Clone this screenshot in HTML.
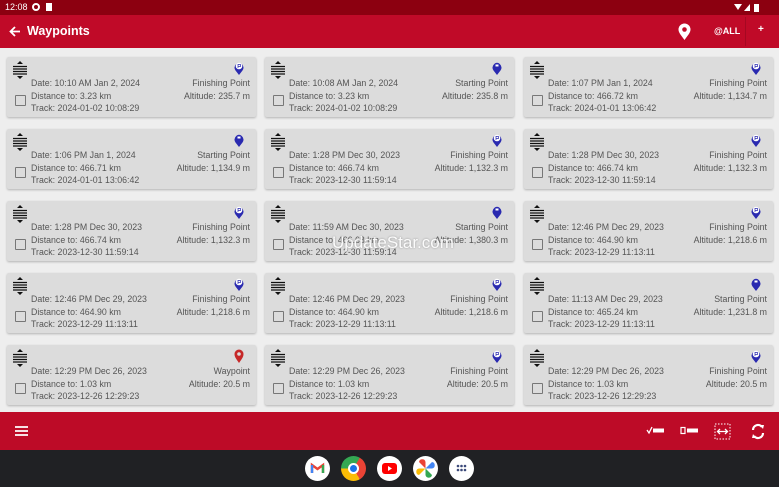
<!DOCTYPE html>
<html><head><meta charset="utf-8"><style>
*{margin:0;padding:0;box-sizing:border-box}
html,body{width:779px;height:487px;overflow:hidden}
body{background:#eeeeee;font-family:"Liberation Sans",sans-serif;position:relative}
.sb{position:absolute;left:0;top:0;width:779px;height:15px;background:#8c0010;color:#fff;font-size:9px}
.ab{position:absolute;left:0;top:15px;width:779px;height:33px;background:#c00a28;color:#fff}
.card{position:absolute;width:249px;height:60px;background:#dcdcdc;border-radius:2px;box-shadow:0 1px 2px rgba(0,0,0,.25);font-size:8.8px;color:#555}
.card .l{position:absolute;left:24px;line-height:12.5px;top:20px}
.card .r{position:absolute;right:6px;text-align:right;line-height:12.5px;top:20px}
.cb{position:absolute;left:8px;top:38px;width:11px;height:11px;border:1.3px solid #777;border-radius:1px}
.drag{position:absolute;left:5px;top:4px}
.pin{position:absolute;right:12px;top:4px}
.bb{position:absolute;left:0;top:412px;width:779px;height:38px;background:#bd0b27}
.nav{position:absolute;left:0;top:450px;width:779px;height:37px;background:#202124}
.app{position:absolute;top:6px;width:25px;height:25px;border-radius:50%;background:#fff}
.wm{position:absolute;left:332px;top:233px;font-size:17px;color:#fff;text-shadow:0 0 2px #888;opacity:.9}
</style></head><body>
<div class="sb"><span style="position:absolute;left:5px;top:2px">12:08</span>
<span style="position:absolute;left:32px;top:3px;width:8px;height:8px;border-radius:50%;border:2px solid #fff"></span>
<span style="position:absolute;left:46px;top:3px;width:6px;height:8px;background:#fff"></span>
<svg style="position:absolute;left:734px;top:3px" width="40" height="9"><path d="M0 1 L8 1 L4 7Z" fill="#fff"/><path d="M10 8 L16 1 L16 8Z" fill="#fff"/><rect x="20" y="1" width="5" height="8" fill="#fff"/></svg></div>
<div class="ab">
<svg style="position:absolute;left:9px;top:11px" width="12" height="11"><path d="M11 5.5H2M6 1L1.5 5.5L6 10" stroke="#fff" stroke-width="1.8" fill="none"/></svg>
<span style="position:absolute;left:27px;top:9px;font-size:12.5px;font-weight:bold">Waypoints</span>
<svg style="position:absolute;left:678px;top:8px" width="13" height="18"><path d="M6.5 17C2 11 0.5 9 0.5 6.5a6 6 0 0 1 12 0C12.5 9 11 11 6.5 17Z" fill="#fff"/><circle cx="6.5" cy="6.5" r="2.3" fill="#c00a28"/></svg>
<span style="position:absolute;left:714px;top:11px;font-size:9px;font-weight:bold">@ALL</span>
<div style="position:absolute;left:745px;top:2px;width:1px;height:29px;background:#a50822"></div>
<span style="position:absolute;left:758px;top:9px;font-size:10px;font-weight:bold">+</span>
</div>
<div id="cards"></div>
<div class="wm">UpdateStar.com</div>
<div class="bb">
<svg style="position:absolute;left:15px;top:14px" width="13" height="10"><path d="M0 1H13M0 5H13M0 9H13" stroke="#fff" stroke-width="1.8"/></svg>
<svg style="position:absolute;left:646px;top:14px" width="20" height="9"><path d="M1 4L3 7L6 1" stroke="#fff" stroke-width="1.3" fill="none"/><rect x="7" y="2.5" width="11" height="4" fill="#fff"/></svg>
<svg style="position:absolute;left:680px;top:14px" width="20" height="9"><rect x="1" y="1.5" width="4" height="6" stroke="#fff" stroke-width="1.2" fill="none"/><rect x="7" y="2.5" width="11" height="4" fill="#fff"/></svg>
<svg style="position:absolute;left:714px;top:11px" width="17" height="17"><rect x="1" y="1" width="15" height="15" stroke="#fff" stroke-dasharray="1.5 1.5" fill="none"/><path d="M4 8.5H13M6 6L3.5 8.5L6 11M11 6L13.5 8.5L11 11" stroke="#fff" stroke-width="1.3" fill="none"/></svg>
<svg style="position:absolute;left:750px;top:10px" width="16" height="19"><path d="M3 8a5 5 0 0 1 9-3M13 11a5 5 0 0 1-9 3" stroke="#fff" stroke-width="2.2" fill="none"/><path d="M10 3L14 3L13 7ZM6 16L2 16L3 12Z" fill="#fff"/></svg>
</div>
<div class="nav">
<div class="app" style="left:305px"><svg width="25" height="25"><path d="M7 17V9L12.5 13L18 9V17" stroke="#ea4335" stroke-width="2.4" fill="none"/><path d="M7 17V9" stroke="#4285f4" stroke-width="2.4"/><path d="M18 17V9" stroke="#34a853" stroke-width="2.4"/></svg></div>
<div class="app" style="left:341px;background:conic-gradient(from 30deg,#ea4335 0 120deg,#fbbc05 120deg 240deg,#34a853 240deg 360deg)"><div style="position:absolute;left:7px;top:7px;width:11px;height:11px;border-radius:50%;background:#1a73e8;border:2px solid #fff"></div></div>
<div class="app" style="left:377px"><div style="position:absolute;left:5px;top:7px;width:15px;height:11px;border-radius:3px;background:#f00"></div><svg style="position:absolute;left:0;top:0" width="25" height="25"><path d="M11 10L15 12.5L11 15Z" fill="#fff"/></svg></div>
<div class="app" style="left:413px"><svg width="25" height="25"><path d="M12.5 12.5L12.5 6a3.3 3.3 0 0 0-6.5 0Z" fill="#ea4335"/><path d="M12.5 12.5L19 12.5a3.3 3.3 0 0 0 0-6.5Z" fill="#4285f4"/><path d="M12.5 12.5L12.5 19a3.3 3.3 0 0 0 6.5 0Z" fill="#34a853"/><path d="M12.5 12.5L6 12.5a3.3 3.3 0 0 0 0 6.5Z" fill="#fbbc05"/></svg></div>
<div class="app" style="left:449px"><svg width="25" height="25" fill="#3c4a7a"><circle cx="9" cy="10" r="1.3"/><circle cx="12.5" cy="10" r="1.3"/><circle cx="16" cy="10" r="1.3"/><circle cx="9" cy="14" r="1.3"/><circle cx="12.5" cy="14" r="1.3"/><circle cx="16" cy="14" r="1.3"/></svg></div>
</div>
<script>
var d=[
["Date: 10:10 AM Jan 2, 2024","Distance to: 3.23 km","Track: 2024-01-02 10:08:29","Finishing Point","Altitude: 235.7 m","f"],
["Date: 10:08 AM Jan 2, 2024","Distance to: 3.23 km","Track: 2024-01-02 10:08:29","Starting Point","Altitude: 235.8 m","s"],
["Date: 1:07 PM Jan 1, 2024","Distance to: 466.72 km","Track: 2024-01-01 13:06:42","Finishing Point","Altitude: 1,134.7 m","f"],
["Date: 1:06 PM Jan 1, 2024","Distance to: 466.71 km","Track: 2024-01-01 13:06:42","Starting Point","Altitude: 1,134.9 m","s"],
["Date: 1:28 PM Dec 30, 2023","Distance to: 466.74 km","Track: 2023-12-30 11:59:14","Finishing Point","Altitude: 1,132.3 m","f"],
["Date: 1:28 PM Dec 30, 2023","Distance to: 466.74 km","Track: 2023-12-30 11:59:14","Finishing Point","Altitude: 1,132.3 m","f"],
["Date: 1:28 PM Dec 30, 2023","Distance to: 466.74 km","Track: 2023-12-30 11:59:14","Finishing Point","Altitude: 1,132.3 m","f"],
["Date: 11:59 AM Dec 30, 2023","Distance to: 466.68 km","Track: 2023-12-30 11:59:14","Starting Point","Altitude: 1,380.3 m","s"],
["Date: 12:46 PM Dec 29, 2023","Distance to: 464.90 km","Track: 2023-12-29 11:13:11","Finishing Point","Altitude: 1,218.6 m","f"],
["Date: 12:46 PM Dec 29, 2023","Distance to: 464.90 km","Track: 2023-12-29 11:13:11","Finishing Point","Altitude: 1,218.6 m","f"],
["Date: 12:46 PM Dec 29, 2023","Distance to: 464.90 km","Track: 2023-12-29 11:13:11","Finishing Point","Altitude: 1,218.6 m","f"],
["Date: 11:13 AM Dec 29, 2023","Distance to: 465.24 km","Track: 2023-12-29 11:13:11","Starting Point","Altitude: 1,231.8 m","s"],
["Date: 12:29 PM Dec 26, 2023","Distance to: 1.03 km","Track: 2023-12-26 12:29:23","Waypoint","Altitude: 20.5 m","w"],
["Date: 12:29 PM Dec 26, 2023","Distance to: 1.03 km","Track: 2023-12-26 12:29:23","Finishing Point","Altitude: 20.5 m","f"],
["Date: 12:29 PM Dec 26, 2023","Distance to: 1.03 km","Track: 2023-12-26 12:29:23","Finishing Point","Altitude: 20.5 m","f"]];
var h="",xs=[7,265,524];
d.forEach(function(c,i){var x=xs[i%3],y=57+Math.floor(i/3)*72;
var pin=c[5]=="w"?'<path d="M5 14C1.5 9 .5 7.5 .5 5a4.5 4.5 0 0 1 9 0C9.5 7.5 8.5 9 5 14Z" fill="#c62828"/><circle cx="5" cy="5" r="1.8" fill="#dcdcdc"/>':
'<path d="M5 14L1.5 9.5A4.5 4.5 0 1 1 8.5 9.5Z" fill="#2a2ab0"/><circle cx="5" cy="5" r="3.3" fill="'+(c[5]=="s"?'#2a2ab0':'#fff')+'"/>'+(c[5]=="s"?'<rect x="3.5" y="3.5" width="3" height="2" fill="#fff"/>':'<path d="M4 3V7M4 3.5H6.5V5.5H4" stroke="#2a2ab0" stroke-width=".7" fill="none"/>');
h+='<div class="card" style="left:'+x+'px;top:'+y+'px"><svg class="drag" width="16" height="18"><path d="M8 0L5 3H11Z M8 18L5 15H11Z" fill="#111"/><path d="M1 5.5H15M1 8H15M1 10.5H15M1 13H15" stroke="#111" stroke-width="1.3"/></svg><svg class="pin" width="10" height="15">'+pin+'</svg><div class="l">'+c[0]+'<br>'+c[1]+'<br>'+c[2]+'</div><div class="r">'+c[3]+'<br>'+c[4]+'</div><div class="cb"></div></div>';});
document.getElementById("cards").innerHTML=h;
</script>
</body></html>
